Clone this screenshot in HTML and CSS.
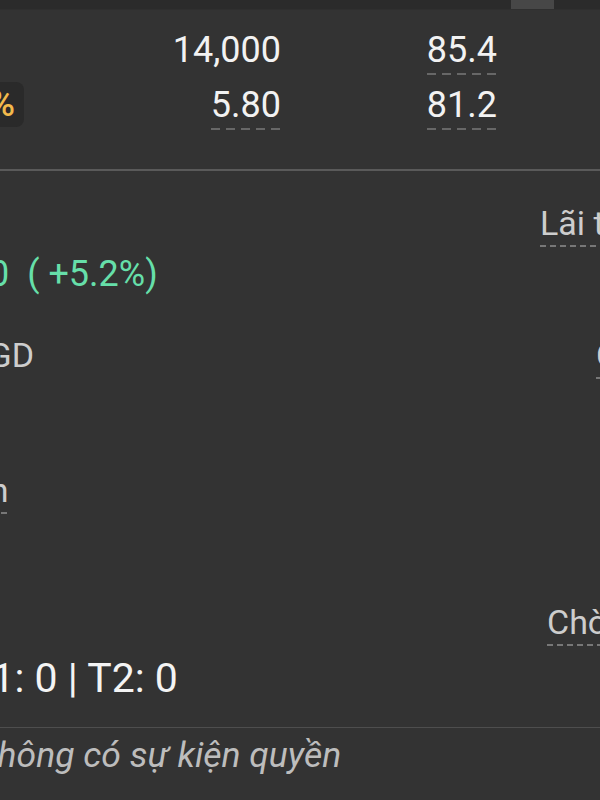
FILE: index.html
```html
<!DOCTYPE html>
<html lang="vi">
<head>
    <meta charset="UTF-8">
    <meta name="viewport" content="width=device-width, initial-scale=1.0">
    <title>Chi tiết mã</title>
    <link rel="stylesheet" href="styles.css">
</head>
<body>
    <div class="screen">
        <div class="topbar"><span class="tab"></span></div>

        <div class="stats">
            <span class="cell"></span>
            <span class="cell num">14,000</span>
            <span class="cell num"><span class="dotted">85.4</span></span>

            <span class="cell badge">5%</span>
            <span class="cell num"><span class="dotted">5.80</span></span>
            <span class="cell num"><span class="dotted">81.2</span></span>
        </div>

        <div class="rule"></div>

        <div class="info">
            <span></span>
            <span class="tag">Lãi tức</span>

            <span class="change">+700<span class="pct">( +5.2%)</span></span>
            <span></span>

            <span class="label lbl-gd">KLGD</span>
            <span class="tag tag-far">Cổ tức</span>

            <span class="label tip lbl-san">Sàn</span>
            <span></span>

            <span></span>
            <span class="tag tag-near">Chờ về</span>

            <span class="hold">T1: 0 | T2: 0</span>
            <span></span>
        </div>

        <div class="rule thin"></div>

        <p class="note">Không có sự kiện quyền</p>
    </div>
</body>
</html>
```

FILE: styles.css
```css
body {
    margin: 0;
    background-color: #333333;
    font-family: Roboto, "Noto Sans", sans-serif;
    color: #f2f2f2;
}
.screen {
    width: 600px;
    height: 800px;
    overflow: hidden;
}
.topbar {
    height: 9px;
    background-color: #2b2b2b;
    border-bottom: 1px solid #2f2f2f;
    padding-left: 511px;
}
.tab {
    display: block;
    width: 43px;
    height: 9px;
    background-color: #474747;
}

/* price table */
.stats {
    display: grid;
    grid-template-columns: 100px 257px 216px;
    grid-auto-rows: 55px;
    margin-left: -76px;
    padding-top: 19px;
    font-size: 36px;
    line-height: 42px;
}
.cell {
    align-self: start;
}
.num {
    text-align: right;
}
.dotted {
    display: inline-block;
    padding-bottom: 4px;
    background: repeating-linear-gradient(90deg, #676767 0 9px, transparent 9px 15px) left bottom / 100% 2px no-repeat;
}
.badge {
    justify-self: end;
    margin-top: -2px;
    padding: 2px 9px 2px 10px;
    line-height: 41px;
    border-radius: 8px;
    background-color: #2a2a2a;
    color: #f3b94c;
    font-weight: 500;
}
.rule {
    height: 2px;
    margin-top: 30px;
    background-color: #5a5a5a;
}
.rule.thin {
    height: 1px;
    margin-top: 25px;
    background-color: #4e4e4e;
}

/* details */
.info {
    display: grid;
    grid-template-columns: 540px 1fr;
    grid-template-rows: 50px 82px 135px 132px 53px 47px;
    padding-top: 32px;
    font-size: 34px;
    line-height: 40px;
}
.info > span {
    align-self: start;
    justify-self: start;
    white-space: nowrap;
}
.label, .tag {
    color: #cdcdcd;
}
.tag, .tip {
    padding-bottom: 4px;
    background: repeating-linear-gradient(90deg, #777777 0 6px, transparent 6px 10px) left bottom / 100% 2px no-repeat;
}
.tag-far {
    margin-left: 56px;
}
.tag-near {
    margin-left: 7px;
}
.change {
    margin-left: -72px;
    font-size: 36px;
    line-height: 42px;
    color: #66dfa9;
}
.pct {
    margin-left: 18px;
}
.lbl-gd {
    margin-left: -50px;
}
.lbl-san {
    margin-left: -49px;
}
.hold {
    margin-left: -33px;
    font-size: 41px;
    line-height: 47px;
    color: #f4f4f4;
}
.note {
    margin: 7px 0 0 -24px;
    font-size: 35.5px;
    line-height: 41px;
    font-style: italic;
    color: #bdbdbd;
}
```
